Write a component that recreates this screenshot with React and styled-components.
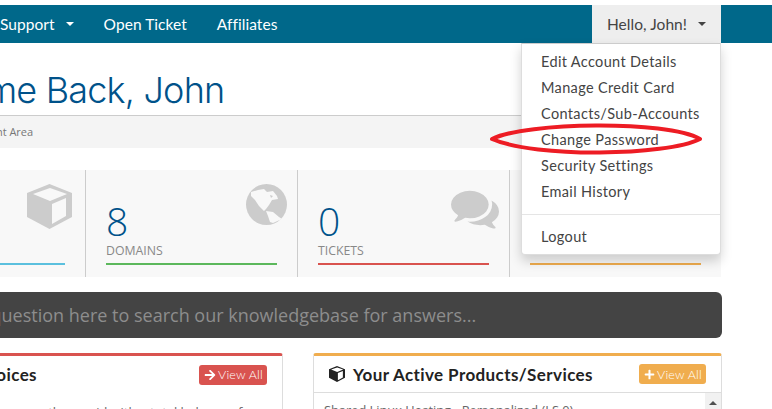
import React from "react";
import styled, { createGlobalStyle } from "styled-components";
import { FaArrowRight, FaPlus, FaMoneyBill } from "react-icons/fa";

const Global = createGlobalStyle`
  html, body {
    margin: 0;
    height: 409px;
    overflow: hidden;
    background: #fff;
  }
  * { box-sizing: border-box; }
`;

const Page = styled.div`
  position: relative;
  width: 772px;
  height: 409px;
  overflow: hidden;
  padding-top: 5px;
  font-family: "Lato", "Open Sans", sans-serif;
  color: #333;
`;

const Navbar = styled.nav`
  height: 38px;
  background: #00688a;
  display: flex;
  justify-content: space-between;
  padding-right: 51px;
`;

const NavGroup = styled.div`
  display: flex;
  margin-left: -15px;
`;

const NavItem = styled.div`
  display: flex;
  align-items: center;
  height: 38px;
  padding: 0 15px;
  font-size: 15.5px;
  letter-spacing: 0.05px;
  color: ${({ $active }) => ($active ? "#444" : "#fff")};
  background: ${({ $active }) => ($active ? "#eee" : "transparent")};
`;

const Caret = styled.span`
  display: inline-block;
  margin-left: 11px;
  border-top: 4px solid currentColor;
  border-left: 4px solid transparent;
  border-right: 4px solid transparent;
`;

const Container = styled.main`
  width: 849px;
  margin-left: -127px;
`;

const Title = styled.h1`
  margin: 0;
  height: 72px;
  padding: 25px 0 0 13px;
  font-family: "Inter", sans-serif;
  font-size: 36px;
  line-height: 44px;
  font-weight: 300;
  letter-spacing: -0.8px;
  color: #00528a;
  white-space: nowrap;
`;

const Breadcrumb = styled.div`
  width: 848px;
  height: 33px;
  padding-left: 30px;
  border-top: 1px solid #ccc;
  background: #f4f4f4;
  font-family: "Open Sans", sans-serif;
  font-size: 11px;
  line-height: 32px;
  color: #777;
`;

const Tiles = styled.section`
  display: grid;
  grid-template-columns: 213px 212px 212px 211px;
  margin-top: 22px;
  width: 848px;
  height: 107px;
  background: #f8f8f8;
`;

const Tile = styled.div`
  position: relative;
  padding: 29px 20px 0 20px;
  border-right: ${({ $last }) => ($last ? "none" : "1px solid #ccc")};
`;

const TileIcon = styled.div`
  position: absolute;
  top: ${({ $top }) => $top}px;
  right: ${({ $right }) => $right}px;
  color: #ccc;
  line-height: 0;
`;

const Stat = styled.div`
  font-family: "Open Sans", sans-serif;
  font-size: 39px;
  line-height: 44px;
  font-weight: 300;
  color: #00528a;
`;

const Label = styled.div`
  font-family: "Open Sans", sans-serif;
  font-size: 12.3px;
  line-height: 16px;
  color: #888;
`;

const Meter = styled.div`
  height: 2px;
  margin-top: 4px;
  background: ${({ $color }) => $color};
`;

const Search = styled.div`
  width: 849px;
  height: 46px;
  margin-top: 15px;
  border-radius: 6px;
  background: #444;
  padding-left: 25px;
  font-family: "Open Sans", sans-serif;
  font-size: 18px;
  line-height: 46px;
  color: #8d8d8d;
  white-space: nowrap;
`;

const Columns = styled.section`
  display: grid;
  grid-template-columns: 410px 409px;
  column-gap: 30px;
  margin-top: 15px;
`;

const Panel = styled.article`
  height: 120px;
  border: 1px solid #ddd;
  border-top: 3px solid ${({ $color }) => $color};
  border-radius: 3px;
  background: #fff;
  overflow: hidden;
`;

const PanelHead = styled.header`
  display: flex;
  align-items: center;
  justify-content: space-between;
  height: 37px;
  padding: 0 15px;
  border-bottom: ${({ $plain }) => ($plain ? "none" : "1px solid #ddd")};
`;

const PanelTitle = styled.h3`
  display: flex;
  align-items: center;
  gap: ${({ $gap }) => $gap}px;
  margin: 0;
  font-size: 17px;
  font-weight: 700;
  letter-spacing: 0.4px;
  color: #222;
`;

const ViewAll = styled.span`
  display: flex;
  align-items: center;
  gap: 2px;
  height: 20px;
  padding: 0 4px 0 5px;
  border-radius: 3px;
  background: ${({ $color }) => $color};
  color: #fff;
  font-size: 12.5px;
  font-weight: 300;
  letter-spacing: 0.2px;
`;

const PanelBody = styled.div`
  position: relative;
  padding: ${({ $lead }) => ($lead ? "10px 15px" : "8px 10px")};
  font-family: "Open Sans", sans-serif;
  font-size: 12.8px;
  line-height: 18px;
  color: #666;
`;

const Scrollbar = styled.div`
  position: absolute;
  top: 0;
  right: 0;
  width: 16px;
  height: 60px;
  background: #f1f1f1;
  &::before {
    content: "";
    position: absolute;
    top: 8px;
    left: 4px;
    border-bottom: 4px solid #505050;
    border-left: 4px solid transparent;
    border-right: 4px solid transparent;
  }
`;

const Menu = styled.ul`
  position: absolute;
  top: 43px;
  left: 521px;
  width: 200px;
  height: 212px;
  margin: 0;
  padding: 5px 0 0;
  list-style: none;
  background: #fff;
  border: 1px solid #ddd;
  border-top-color: #ccc;
  border-radius: 0 0 4px 4px;
  box-shadow: 0 6px 12px rgba(0, 0, 0, 0.175);
`;

const MenuItem = styled.li`
  height: 26px;
  padding-left: 19px;
  font-size: 14.5px;
  line-height: 26px;
  letter-spacing: 0.35px;
  color: #444;
  white-space: nowrap;
`;

const MenuDivider = styled.li`
  height: 1px;
  margin: 9px 0 9px;
  background: #e5e5e5;
`;

const Annotation = styled.svg`
  position: absolute;
  top: 120px;
  left: 486px;
  pointer-events: none;
`;

const CubeIcon = ({ size }) => (
  <svg width={size} height={size} viewBox="0 0 45 45">
    <path
      fill="currentColor"
      fillRule="evenodd"
      d="M22.5 0 45 9V33L22.5 45 0 33V9ZM6 10 23 17 40 10 23 4ZM25 20V40L39 32V14Z"
    />
  </svg>
);

const GlobeIcon = ({ size }) => (
  <svg width={size} height={size} viewBox="0 0 41 41">
    <circle cx="20.5" cy="20.5" r="20.5" fill="currentColor" />
    <path
      fill="#f8f8f8"
      d="M5 8 12 6 18 5 21 8 27 7 31 12 32 15 26 16 23 21 20 25 18 27 13 22 9 16 5 12ZM20 27 27 28 33 33 36 35 27 39 24 38 22 32Z"
    />
    <path fill="currentColor" d="M24 11 27 12 25 14ZM26 21 30 23 28 25Z" />
  </svg>
);

const CommentsIcon = ({ size }) => (
  <svg width={size} height={size} viewBox="0 0 1792 1792">
    <path
      fill="currentColor"
      d="M1408 768q0 139-94 257t-256.5 186.5-353.5 68.5q-86 0-176-16-124 88-278 128-36 9-86 16h-3q-11 0-20.5-8t-11.5-21q-1-3-1-6.5t.5-6.5 2-6l2.5-5 3.5-5.5 4-5 4.5-5 4-4.5q5-6 23-25t26-29.5 22.5-29 25-38.5 20.5-44q-124-72-195-177t-71-224q0-139 94-257t256.5-186.5 353.5-68.5 353.5 68.5 256.5 186.5 94 257zm384 256q0 120-71 224.5t-195 176.5q10 24 20.5 44t25 38.5 22.5 29 26 29.5 23 25q1 1 4 4.5t4.5 5 4 5 3.5 5.5l2.5 5 2 6 .5 6.5-1 6.5q-3 14-13 22t-22 7q-50-7-86-16-154-40-278-128-90 16-176 16-271 0-472-132 58 4 88 4 161 0 309-45t264-129q125-92 192-212t67-254q0-77-23-152 129 71 204 178t75 230z"
    />
  </svg>
);

const menuTop = ["Edit Account Details", "Manage Credit Card", "Contacts/Sub-Accounts", "Change Password", "Security Settings", "Email History"];

const App = () => (
  <Page>
    <Global />
    <Navbar>
      <NavGroup>
        <NavItem>Support<Caret /></NavItem>
        <NavItem>Open Ticket</NavItem>
        <NavItem>Affiliates</NavItem>
      </NavGroup>
      <NavItem $active>Hello, John!<Caret /></NavItem>
    </Navbar>
    <Container>
      <Title>Welcome Back, John</Title>
      <Breadcrumb>Portal Home / Client Area</Breadcrumb>
      <Tiles>
        <Tile>
          <Stat>2</Stat>
          <Label>SERVICES</Label>
          <Meter $color="#5bc0de" />
          <TileIcon $top={14} $right={13}><CubeIcon size={45} /></TileIcon>
        </Tile>
        <Tile>
          <Stat>8</Stat>
          <Label>DOMAINS</Label>
          <Meter $color="#5cb85c" />
          <TileIcon $top={14} $right={10}><GlobeIcon size={41} /></TileIcon>
        </Tile>
        <Tile>
          <Stat>0</Stat>
          <Label>TICKETS</Label>
          <Meter $color="#d9534f" />
          <TileIcon $top={14} $right={10}><CommentsIcon size={48} /></TileIcon>
        </Tile>
        <Tile $last>
          <Stat>0</Stat>
          <Label>INVOICES</Label>
          <Meter $color="#f0ad4e" />
        </Tile>
      </Tiles>
      <Search>Enter your question here to search our knowledgebase for answers...</Search>
      <Columns>
        <Panel $color="#d9534f">
          <PanelHead $plain>
            <PanelTitle $gap={6}><FaMoneyBill size={16} />Unpaid Invoices</PanelTitle>
            <ViewAll $color="#d9534f"><FaArrowRight size={12} />View All</ViewAll>
          </PanelHead>
          <PanelBody $lead>You have 2 invoices currently unpaid with a total balance of $0.00 USD. Pay them now to avoid any interruption.</PanelBody>
        </Panel>
        <Panel $color="#f0ad4e">
          <PanelHead>
            <PanelTitle $gap={8}><CubeIcon size={16} />Your Active Products/Services</PanelTitle>
            <ViewAll $color="#f0ad4e"><FaPlus size={11} />View All</ViewAll>
          </PanelHead>
          <PanelBody>
            Shared Linux Hosting - Personalized (LS 0)
            <Scrollbar />
          </PanelBody>
        </Panel>
      </Columns>
    </Container>
    <Menu>
      {menuTop.map((item) => (
        <MenuItem key={item}>{item}</MenuItem>
      ))}
      <MenuDivider />
      <MenuItem>Logout</MenuItem>
    </Menu>
    <Annotation width="222" height="38" viewBox="0 0 222 38">
      <path d="M6 19C40 2 180 0 214 19 180 36 50 38 6 19Z" fill="none" stroke="#ed1c24" strokeWidth="4" strokeLinejoin="round" />
    </Annotation>
  </Page>
);

export default App;
